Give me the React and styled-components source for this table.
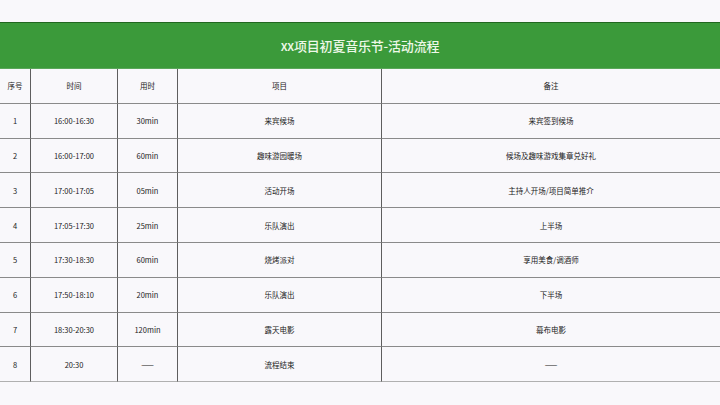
import React from "react";
import styled, { createGlobalStyle } from "styled-components";

const Global = createGlobalStyle`
  html, body { margin: 0; padding: 0; background: #f9f8fb; }
  body { font-family: "Noto Sans CJK SC", "Noto Sans", sans-serif; }
`;

const Page = styled.div`
  width: 720px;
  height: 405px;
  background: #f9f8fb;
  padding-top: 22px;
  box-sizing: border-box;
  overflow: hidden;
`;

const TitleBar = styled.div`
  height: 47px;
  box-sizing: border-box;
  border-top: 1px solid #21671f;
  border-bottom: 1px solid #5aa75a;
  background: #3b9a3a;
  display: flex;
  align-items: center;
  justify-content: center;
  color: #eef8e8;
  font-size: 13px;
  font-weight: 500;
  letter-spacing: -0.2px;
`;

const Grid = styled.div`
  display: grid;
  grid-template-columns: 31px 87px 60px 204px 1fr;
  grid-auto-rows: 34.8px;
`;

const Cell = styled.div`
  display: flex;
  align-items: center;
  justify-content: center;
  font-size: 7.5px;
  color: #222;
  border-bottom: 1px solid ${(p) => (p.$last ? "#b0b0b0" : "#8a8a8a")};
  border-right: ${(p) => (p.$end ? "none" : "1px solid #5e5e5e")};
  box-sizing: border-box;
  white-space: nowrap;
`;

const head = ["序号", "时间", "用时", "项目", "备注"];
const rows = [
  ["1", "16:00-16:30", "30min", "来宾候场", "来宾签到候场"],
  ["2", "16:00-17:00", "60min", "趣味游园暖场", "候场及趣味游戏集章兑好礼"],
  ["3", "17:00-17:05", "05min", "活动开场", "主持人开场/项目简单推介"],
  ["4", "17:05-17:30", "25min", "乐队演出", "上半场"],
  ["5", "17:30-18:30", "60min", "烧烤派对", "享用美食/调酒师"],
  ["6", "17:50-18:10", "20min", "乐队演出", "下半场"],
  ["7", "18:30-20:30", "120min", "露天电影", "幕布电影"],
  ["8", "20:30", "——", "流程结束", "——"],
];

export default function App() {
  const all = [head, ...rows];
  return (
    <Page>
      <Global />
      <TitleBar>xx项目初夏音乐节-活动流程</TitleBar>
      <Grid>
        {all.map((r, i) =>
          r.map((c, j) => (
            <Cell key={`${i}-${j}`} $end={j === 4} $last={i === all.length - 1}>
              {c}
            </Cell>
          ))
        )}
      </Grid>
    </Page>
  );
}
